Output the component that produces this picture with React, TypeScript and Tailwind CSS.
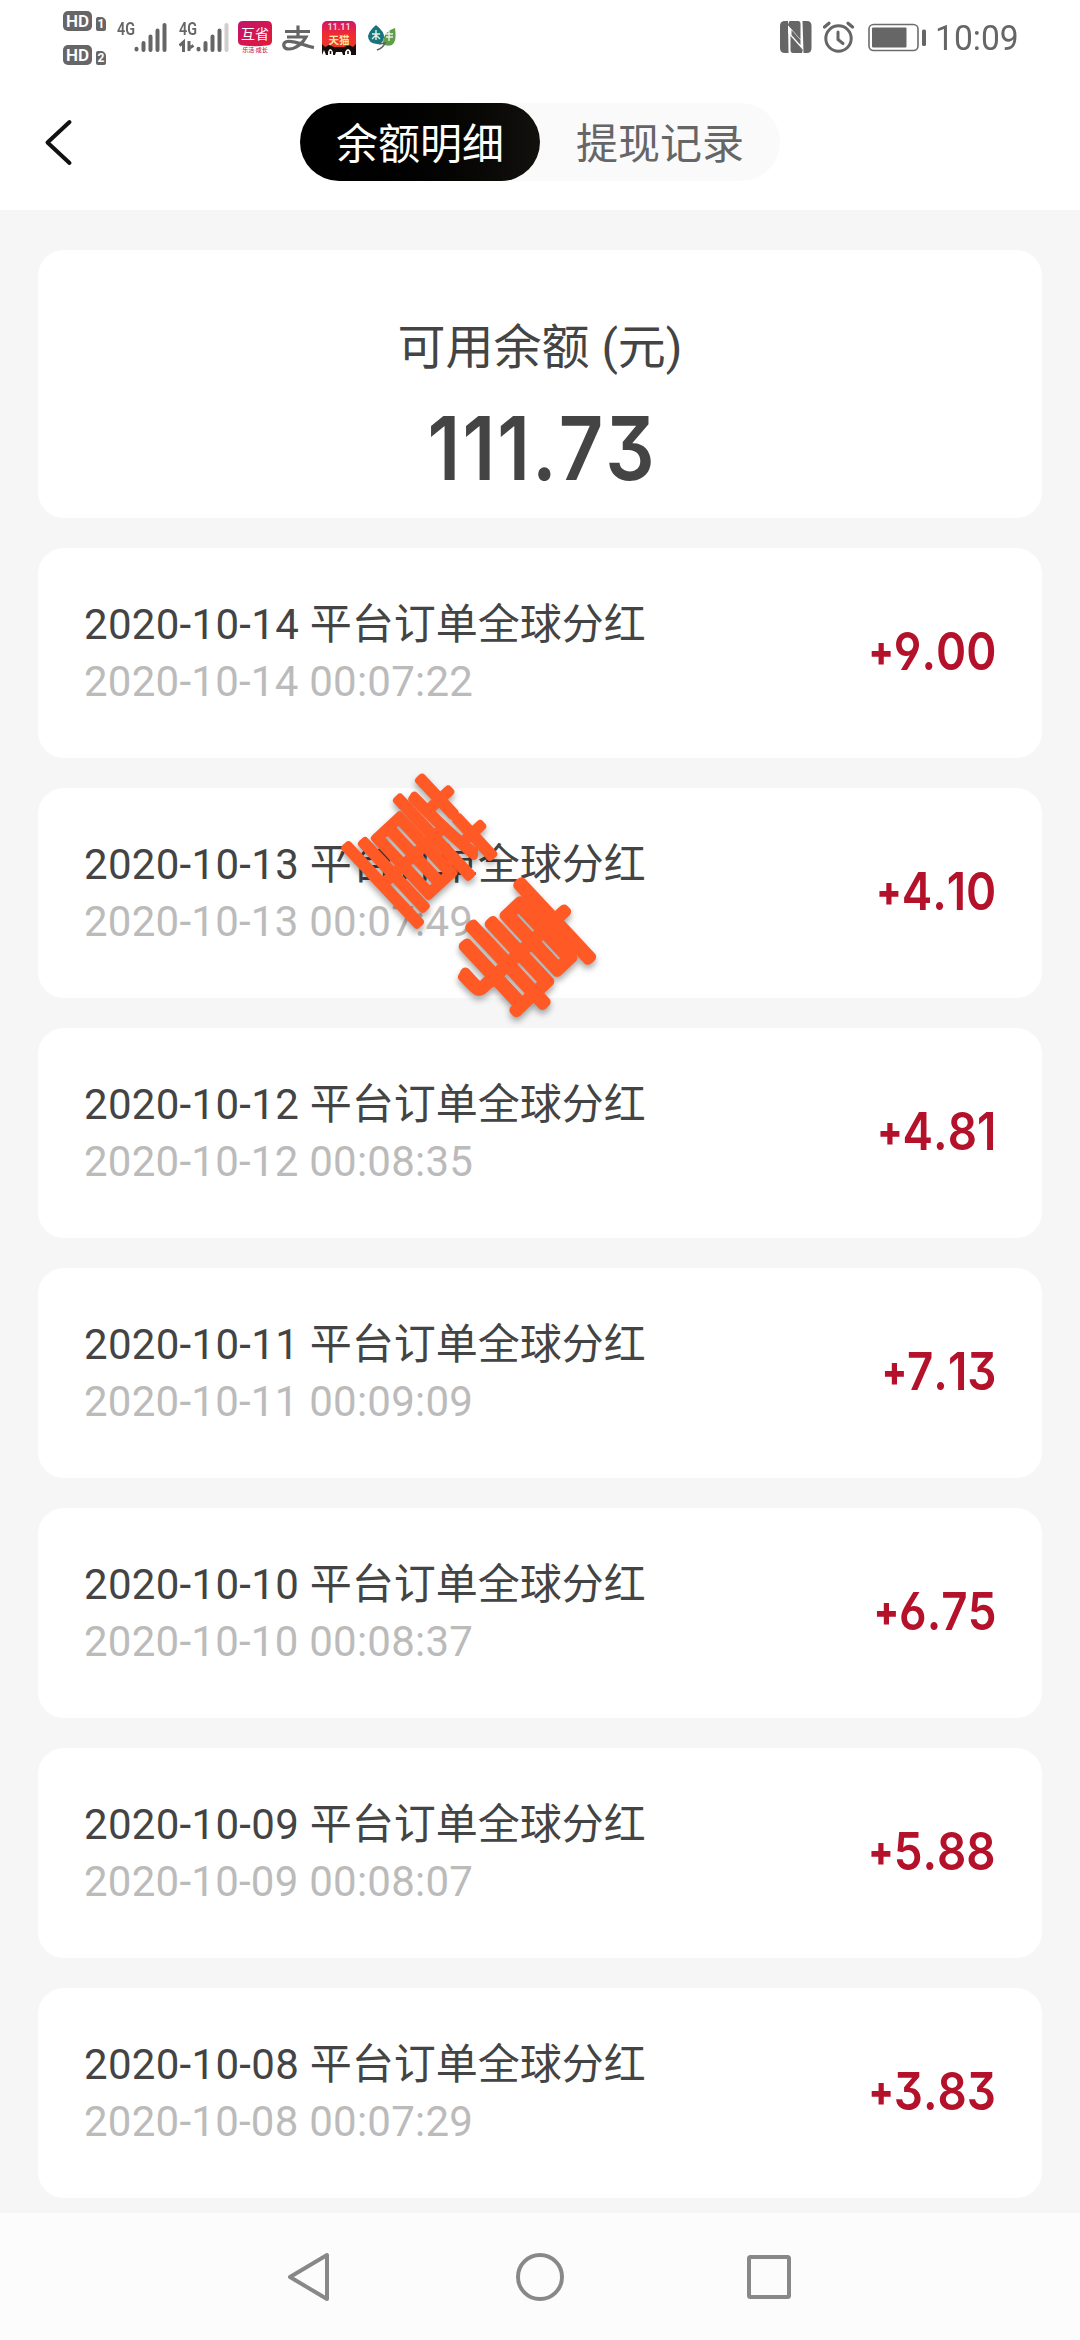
import React from "react";

const records = [
  { date: "2020-10-14", time: "00:07:22", amount: "9.00" },
  { date: "2020-10-13", time: "00:07:49", amount: "4.10", stamp: true },
  { date: "2020-10-12", time: "00:08:35", amount: "4.81" },
  { date: "2020-10-11", time: "00:09:09", amount: "7.13" },
  { date: "2020-10-10", time: "00:08:37", amount: "6.75" },
  { date: "2020-10-09", time: "00:08:07", amount: "5.88" },
  { date: "2020-10-08", time: "00:07:29", amount: "3.83" },
];

function HdBadge({ n }: { n: string }) {
  return (
    <div className="flex h-5 items-end gap-1">
      <div className="flex h-5 w-[29px] items-center justify-center rounded-[5px] bg-[#666] text-[17px] leading-none font-semibold text-white">HD</div>
      <div className="flex h-[14px] w-[10px] items-center justify-center rounded-[2px] rounded-tr-[5px] bg-[#666] text-[12px] leading-none font-bold text-white">{n}</div>
    </div>
  );
}

function Signal({ weak }: { weak?: boolean }) {
  return (
    <div className="relative h-8 w-[50px]">
      <div className="font-['Roboto'] text-[18px] leading-[16px] font-semibold text-[#666]">
        <span className="inline-block origin-left scale-x-[0.8]">4G</span>
      </div>
      <svg className="absolute top-0 left-0" width="52" height="32" viewBox="0 0 52 32">
        {weak && (
          <g fill="none" stroke="#666" strokeWidth="3">
            <path d="M0.5 24.5L4.5 21V31M10 20V30M9 28L14.5 24.5" />
          </g>
        )}
        <g stroke="#666" strokeWidth="4" strokeLinecap="round">
          <path d="M19.500 27.800V28.500M26.500 22V29M33.500 15.500V29M40.500 9.500V29" />
          <path d="M47.500 4V29" stroke={weak ? "#d3cccc" : "#666"} />
        </g>
      </svg>
    </div>
  );
}

function StatusBar() {
  return (
    <div className="flex h-[75px] items-start pl-[63px] font-['Roboto','Noto_Sans_CJK_SC',sans-serif]">
      <div className="mt-[11px] flex flex-col gap-[14px]">
        <HdBadge n="1" />
        <HdBadge n="2" />
      </div>
      <div className="mt-[21px] ml-[11px]"><Signal /></div>
      <div className="mt-[21px] ml-[12px]"><Signal weak /></div>
      <svg className="mt-[21px] ml-[9px]" width="34" height="32" viewBox="0 0 34 32">
        <defs>
          <linearGradient id="hs" x1="0" y1="0" x2="1" y2="1">
            <stop offset="0" stopColor="#c3126f" />
            <stop offset="1" stopColor="#e21b35" />
          </linearGradient>
        </defs>
        <path d="M5 0H29Q34 0 34 5V20Q34 24 29 24.500Q17 26 5 24.500Q0 24 0 20V5Q0 0 5 0Z" fill="url(#hs)" />
        <text x="17" y="18" textAnchor="middle" fontSize="14" fontWeight="400" fill="#fff">互省</text>
        <text x="17" y="31" textAnchor="middle" fontSize="6" fontWeight="500" fill="#c3285e">乐活·成长</text>
      </svg>
      <svg className="mt-[25px] ml-[10px]" width="33" height="28" viewBox="0 0 33 28" fill="none" stroke="#666" strokeWidth="3.200">
        <path d="M3 6.500H28M16 0.500V12M5 12H24C21 18 14 24 7 24C1 24 0 18 5 16.500C12 15 23 21 32 22.500" />
      </svg>
      <svg className="mt-[21px] ml-[7px]" width="34" height="34" viewBox="0 0 34 34">
        <defs>
          <linearGradient id="tm" x1="0" y1="0" x2="0" y2="1">
            <stop offset="0" stopColor="#cf176c" />
            <stop offset="0.450" stopColor="#ef2b33" />
            <stop offset="1" stopColor="#ee3b24" />
          </linearGradient>
        </defs>
        <rect width="34" height="30" rx="5" fill="url(#tm)" />
        <path d="M0 23L3 26L7 24L12 26H22L27 24L31 26L34 23V34H0Z" fill="#170d0d" />
        <path d="M6 34V31Q8 25 11 31V34ZM23 34V31Q26 25 29 31V34ZM0 34L2 29L4 34ZM13 34L14 31H20L21 34Z" fill="#fff" />
        <path d="M8.500 30V33M26 30V33" stroke="#170d0d" strokeWidth="1.500" />
        <text x="17" y="9" textAnchor="middle" fontSize="9" fontWeight="600" fill="#fbd7d7">11.11</text>
        <text x="17" y="23" textAnchor="middle" fontSize="10.500" fontWeight="700" fill="#ffe6a0">天猫</text>
      </svg>
      <svg className="mt-[25px] ml-[12px]" width="28" height="26" viewBox="0 0 28 26">
        <path d="M8 0Q17 7 16 13Q14 20 9 19Q0 18 0 11Q1 6 8 0Z" fill="#18747f" />
        <path d="M27 3Q29 17 24 20Q19 22 15 19Q14 7 27 3Z" fill="#5f9d48" />
        <path d="M4 9H12M8 5V15M8 10L4 14M8 10L12 14M18 9H25M21 6V16M18 12H25" stroke="#e5f1e4" strokeWidth="1.400" fill="none" />
        <path d="M9 25Q15 23 17 18L11 19" stroke="#5b6358" strokeWidth="1.500" fill="none" />
      </svg>
      <svg className="mt-[21px] ml-[384px]" width="32" height="32" viewBox="0 0 32 32" fill="#666">
        <path d="M5 0H8L8.500 32H5Q0 32 0 27V5Q0 0 5 0Z" />
        <path d="M9.500 0H18Q20.500 0 20.500 3V18.500L7.800 4Z" />
        <path d="M22.500 0H27Q31.500 0 31.500 5V27Q31.500 32 27 32H23.500Z" />
        <path d="M10.500 13L23 28L22 32H13Q10.500 32 10.500 29Z" />
        <path d="M8 5L23 22V29L8 12Z" fill="#fff" />
        <path d="M11.500 9L20.500 19V24L11.500 14Z" />
      </svg>
      <svg className="mt-[21px] ml-[11px]" width="31" height="32" viewBox="0 0 31 32" fill="none" stroke="#666" strokeLinecap="round">
        <circle cx="15.500" cy="17.500" r="12.700" strokeWidth="3" />
        <path d="M15 11V18.500L20 22.500" strokeWidth="3" />
        <path d="M1.500 6L6 2.200M25 2.200L29.500 6" strokeWidth="3.200" />
      </svg>
      <svg className="mt-[23px] ml-[14px]" width="60" height="30" viewBox="0 0 60 30">
        <rect x="1" y="1.500" width="49" height="26" rx="4.500" fill="none" stroke="#6c6c6c" strokeWidth="1.600" />
        <rect x="4" y="4.500" width="34.500" height="20" rx="1" fill="#666" />
        <rect x="54" y="6.500" width="4" height="16.500" rx="1.500" fill="#666" />
      </svg>
      <div className="mt-[17px] ml-[7px] text-[35px] leading-[44px] text-[#666]">
        <span className="inline-block origin-left scale-x-[0.96]">10:09</span>
      </div>
    </div>
  );
}

function Header() {
  return (
    <div className="relative flex h-[135px] justify-center pt-[28px]">
      <svg className="absolute top-[43px] left-[43px]" width="32" height="48" viewBox="0 0 32 48" fill="none" stroke="#111" strokeWidth="4" strokeLinecap="round" strokeLinejoin="round">
        <path d="M26.500 4L4.500 24.500L26.500 45" />
      </svg>
      <div className="flex h-[78px] w-[480px] rounded-full bg-[#fafafa] text-[42px] leading-[84px]">
        <div className="w-[240px] rounded-full bg-linear-to-r from-black to-[#12110e] text-center text-white">余额明细</div>
        <div className="w-[240px] text-center text-[#666]">提现记录</div>
      </div>
    </div>
  );
}

function Stamp() {
  return (
    <svg
      className="absolute top-[-40px] left-[290px] z-10 overflow-visible font-['Noto_Sans_CJK_TC',sans-serif] drop-shadow-[0_4px_3px_rgba(0,0,0,0.35)]"
      width="290"
      height="310"
      viewBox="0 0 290 310"
      fill="#ff5a26"
      stroke="#ff5a26"
      strokeLinejoin="round"
      strokeLinecap="round"
      fontSize="120"
      fontWeight="100"
      textAnchor="middle"
    >
      <g transform="translate(93 101) rotate(47) scale(1 1.1)" strokeWidth="7.5"><text y="45">董</text></g>
      <g transform="translate(193 204) rotate(47) scale(1 1.1)" strokeWidth="9.5"><text y="45">事</text></g>
    </svg>
  );
}

const numeric = "font-['Inter'] [font-kerning:none] [font-feature-settings:'cv09','cv03','cv04','calt'_0]";

export default function App() {
  return (
    <div className="flex h-[2340px] w-[1080px] flex-col overflow-hidden bg-[#f6f6f6] font-['Roboto','Noto_Sans_CJK_SC',sans-serif]">
      <div className="bg-white">
        <StatusBar />
        <Header />
      </div>
      <div className="flex flex-1 flex-col gap-[30px] px-[38px] pt-[40px]">
        <div className="flex h-[268px] flex-col items-center rounded-[26px] bg-white pt-[62px] text-[#444]">
          <div className="text-[48px] leading-[72px]">可用余额 (元)</div>
          <div className={`${numeric} mt-[12px] ml-[5px] origin-center scale-x-[0.88] text-[88px] leading-[104px] font-semibold tracking-[2.3px]`}>111.73</div>
        </div>
        {records.map((r) => (
          <div key={r.date} className="relative flex h-[210px] shrink-0 items-center justify-between rounded-[26px] bg-white pr-[46px] pl-[46px]">
            <div className="text-[42px] leading-[57px]">
              <div className="text-[#444]"><span className="tracking-[0.3px]">{r.date} </span>平台订单全球分红</div>
              <div className="tracking-[0.25px] text-[#bbb]">{r.date} {r.time}</div>
            </div>
            <div className={`${numeric} flex origin-right scale-x-[0.88] items-center text-[52px] leading-none font-semibold text-[#b4122b]`}>
              <span className="mt-[-5px] text-[42px] font-extrabold">+</span>
              <span className="mt-[-2px]">{r.amount}</span>
            </div>
            {r.stamp && <Stamp />}
          </div>
        ))}
      </div>
      <div className="flex h-[127px] items-center bg-[#fcfcfc] pl-[286px]">
        <svg width="46" height="52" viewBox="0 0 46 52" fill="none" stroke="#888" strokeWidth="4" strokeLinejoin="round">
          <path d="M4 26L41 4V48Z" />
        </svg>
        <svg className="ml-[182px]" width="52" height="52" viewBox="0 0 52 52" fill="none" stroke="#888" strokeWidth="4">
          <circle cx="26" cy="26" r="22" />
        </svg>
        <svg className="ml-[177px]" width="52" height="52" viewBox="0 0 52 52" fill="none" stroke="#888" strokeWidth="4">
          <rect x="6" y="6" width="40" height="40" rx="1.500" />
        </svg>
      </div>
    </div>
  );
}
